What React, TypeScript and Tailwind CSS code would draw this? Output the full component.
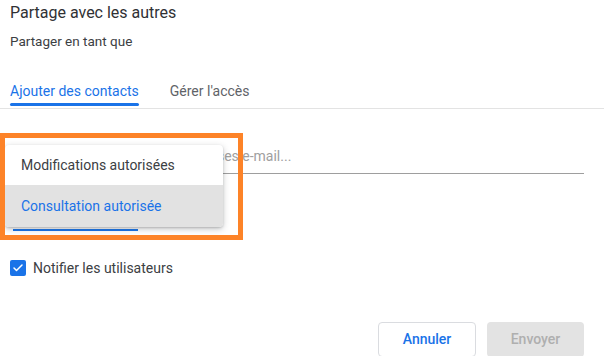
import { Check } from 'lucide-react'

const font = { fontFamily: 'Roboto, "Liberation Sans", sans-serif' }

function Tab({ label, active = false }: { label: string; active?: boolean }) {
  return (
    <div className="flex flex-col">
      <span
        className={
          active
            ? 'text-[14px] leading-[20px] text-[#1a73e8]'
            : 'text-[14px] leading-[20px] text-[#5f6368]'
        }
      >
        {label}
      </span>
      <div className={active ? 'mt-[2px] h-[3px] rounded-full bg-[#1a73e8]' : 'mt-[2px] h-[3px]'} />
    </div>
  )
}

function RoleMenu() {
  return (
    <div className="absolute left-[5px] top-[145px] w-[218px] overflow-hidden rounded-[4px] bg-white shadow-[0_2px_6px_rgba(60,64,67,0.3),0_1px_2px_rgba(60,64,67,0.2)]">
      <div className="flex h-[40px] items-center pl-[16px] text-[14px] text-[#3c4043]">
        Modifications autorisées
      </div>
      <div className="flex h-[42px] items-center bg-[#e2e2e2] pl-[16px] text-[14px] text-[#1a73e8]">
        Consultation autorisée
      </div>
    </div>
  )
}

export default function App() {
  return (
    <div className="relative h-[356px] w-[604px] overflow-hidden bg-white" style={font}>
      <div className="px-[10px] pt-[3px]">
        <h1 className="text-[16px] leading-[20px] text-[#303134]">Partage avec les autres</h1>
        <p className="mt-[10px] text-[13.5px] leading-[16px] text-[#3c4043]">Partager en tant que</p>
      </div>

      <div className="mt-[32px] flex gap-[31px] border-b border-[#e3e3e3] px-[10px] pb-[2px]">
        <Tab label="Ajouter des contacts" active />
        <Tab label="Gérer l'accès" />
      </div>

      <div className="ml-[10px] mr-[20px] mt-[35px] border-b border-[#9e9e9e] pb-[5px]">
        <span className="text-[14px] leading-[20px] text-[#a0a0a0]">
          Saisissez des noms ou des adresses e-mail...
        </span>
      </div>

      <div className="ml-[13px] mt-[55px] h-[2px] w-[125px] bg-[#1a73e8]" />

      <label className="ml-[10px] mt-[29px] flex items-center gap-[7px]">
        <span className="flex h-[16px] w-[16px] items-center justify-center rounded-[2px] bg-[#1a73e8]">
          <Check className="h-[12px] w-[12px] text-white" strokeWidth={3} />
        </span>
        <span className="text-[14px] leading-[16px] text-[#3c4043]">Notifier les utilisateurs</span>
      </label>

      <div className="mt-[46px] flex justify-end gap-[11px] pr-[20px]">
        <button className="h-[35px] w-[98px] rounded-[4px] border border-[#dadce0] bg-white text-[14px] font-medium text-[#1a73e8]">
          Annuler
        </button>
        <button className="h-[35px] w-[97px] rounded-[4px] bg-[#e3e3e3] text-[14px] font-medium text-[#afafaf]">
          Envoyer
        </button>
      </div>

      <RoleMenu />

      <div className="pointer-events-none absolute left-0 top-[133px] h-[107px] w-[243px] border-[5px] border-[#fd8328]" />
    </div>
  )
}
